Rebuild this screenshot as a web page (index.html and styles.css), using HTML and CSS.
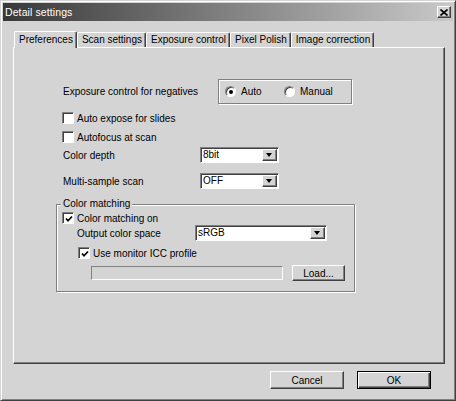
FILE: index.html
```html
<!DOCTYPE html>
<html>
<head>
<meta charset="utf-8">
<link rel="stylesheet" href="styles.css">
</head>
<body>
<div class="window">
  <div class="titlebar">
    <span class="title">Detail settings</span>
    <span class="close"><svg width="8" height="7" viewBox="0 0 8 7"><path d="M0.5 0.5 L7.5 6.5 M7.5 0.5 L0.5 6.5" stroke="#000" stroke-width="1.6"/></svg></span>
  </div>
  <div class="tabs">
    <div class="tab active">Preferences</div>
    <div class="tab">Scan settings</div>
    <div class="tab">Exposure control</div>
    <div class="tab">Pixel Polish</div>
    <div class="tab">Image correction</div>
  </div>
  <div class="panel">
    <div class="exp-row">
      <span class="exp-label">Exposure control for negatives</span>
      <div class="radio-box">
        <label class="radio radio-auto"><span class="rb checked"></span>Auto</label>
        <label class="radio"><span class="rb"></span>Manual</label>
      </div>
    </div>
    <div class="cb-row cb1"><span class="cb"></span>Auto expose for slides</div>
    <div class="cb-row cb2"><span class="cb"></span>Autofocus at scan</div>
    <div class="sel-row depth-row">
      <span class="sel-label">Color depth</span>
      <div class="select"><span class="sel-text">8bit</span><span class="dd"><span class="arrow"></span></span></div>
    </div>
    <div class="sel-row multi-row">
      <span class="sel-label">Multi-sample scan</span>
      <div class="select"><span class="sel-text">OFF</span><span class="dd"><span class="arrow"></span></span></div>
    </div>
    <fieldset class="group">
      <legend class="legend">Color matching</legend>
      <div class="cb-row cm-row"><span class="cb"><svg class="check" width="8" height="8" viewBox="0 0 8 8"><path d="M1 3.5 L3 5.8 L7 1.5" fill="none" stroke="#000" stroke-width="1.7"/></svg></span>Color matching on</div>
      <div class="sel-row out-row">
        <span class="out-label">Output color space</span>
        <div class="select wide"><span class="sel-text">sRGB</span><span class="dd"><span class="arrow"></span></span></div>
      </div>
      <div class="cb-row mon-row"><span class="cb"><svg class="check" width="8" height="8" viewBox="0 0 8 8"><path d="M1 3.5 L3 5.8 L7 1.5" fill="none" stroke="#000" stroke-width="1.7"/></svg></span>Use monitor ICC profile</div>
      <div class="file-row">
        <span class="field"></span>
        <span class="btn load">Load...</span>
      </div>
    </fieldset>
  </div>
  <div class="buttons">
    <span class="btn big">Cancel</span>
    <span class="btn big default">OK</span>
  </div>
</div>
</body>
</html>
```
FILE: styles.css
```css
html, body {
  margin: 0;
  padding: 0;
  background: #d4d4d4;
}
body {
  font-family: "Liberation Sans", Arial, sans-serif;
  font-size: 10px;
  color: #000;
}
.window {
  width: 456px;
  height: 401px;
  box-sizing: border-box;
  border: 1px solid;
  border-color: #d4d4d4 #404040 #404040 #d4d4d4;
  box-shadow: inset 1px 1px #fff, inset -1px -1px #808080;
  padding: 2px;
  display: flex;
  flex-direction: column;
  background: #d4d4d4;
}
.titlebar {
  height: 18px;
  flex: none;
  background: linear-gradient(90deg, #383838 0%, #7a7a7a 45%, #c9c9c9 100%);
  display: flex;
  align-items: center;
  justify-content: space-between;
  padding: 0 2px;
  color: #fff;
}
.title {
  font-size: 10.5px;
  letter-spacing: 0.1px;
}
.close {
  width: 14px;
  height: 12px;
  box-sizing: border-box;
  background: #d4d4d4;
  border: 1px solid;
  border-color: #fff #404040 #404040 #fff;
  box-shadow: inset -1px -1px #808080;
  display: flex;
  align-items: center;
  justify-content: center;
}
.tabs {
  display: flex;
  align-items: flex-end;
  height: 16px;
  margin: 10px 0 0 11px;
  flex: none;
}
.tab {
  height: 15px;
  box-sizing: border-box;
  padding: 0 3px 0 4px;
  border: 1px solid;
  border-bottom: none;
  border-color: #fff #404040 #404040 #fff;
  border-radius: 2px 2px 0 0;
  box-shadow: inset -1px 0 #808080;
  line-height: 13px;
  background: #d4d4d4;
}
.tab.active {
  height: 17px;
  margin-bottom: -1px;
  position: relative;
  z-index: 1;
  line-height: 15px;
}
.panel {
  height: 317px;
  flex: none;
  box-sizing: border-box;
  margin: 0 8px 0 10px;
  border: 1px solid;
  border-color: #fff #404040 #404040 #fff;
  box-shadow: inset -1px -1px #808080;
  padding: 31px 0 0 48px;
}
.exp-row {
  display: flex;
  align-items: center;
  height: 25px;
}
.exp-label {
  width: 155px;
  padding-left: 1px;
}
.radio-box {
  width: 134px;
  height: 25px;
  box-sizing: border-box;
  border: 1px solid #808080;
  box-shadow: inset 1px 1px #fff, 1px 1px #fff;
  display: flex;
  align-items: center;
  padding-left: 6px;
}
.radio {
  display: flex;
  align-items: center;
  gap: 5px;
}
.radio-auto {
  width: 59px;
}
.rb {
  width: 11px;
  height: 11px;
  box-sizing: border-box;
  border-radius: 50%;
  border: 1px solid;
  border-color: #808080 #fff #fff #808080;
  box-shadow: inset 1px 1px #404040;
  background: #fff;
  display: flex;
  align-items: center;
  justify-content: center;
}
.rb.checked::after {
  content: "";
  width: 4px;
  height: 4px;
  border-radius: 50%;
  background: #000;
}
.cb-row {
  display: flex;
  align-items: center;
  height: 14px;
  gap: 3px;
}
.cb {
  width: 12px;
  height: 12px;
  box-sizing: border-box;
  border: 1px solid;
  border-color: #808080 #fff #fff #808080;
  box-shadow: inset 1px 1px #404040;
  background: #fff;
  display: flex;
  align-items: center;
  justify-content: center;
  flex: none;
}
.check {
  margin: 1px 0 0 1px;
}
.cb1 { margin-top: 7px; }
.cb2 { margin-top: 5px; }
.sel-row {
  display: flex;
  align-items: center;
  height: 16px;
}
.sel-label {
  width: 137px;
  padding-left: 1px;
}
.depth-row { margin-top: 3px; }
.multi-row { margin-top: 10px; }
.select {
  width: 79px;
  height: 16px;
  box-sizing: border-box;
  border: 1px solid;
  border-color: #808080 #fff #fff #808080;
  box-shadow: inset 1px 1px #404040;
  background: #fff;
  display: flex;
  align-items: center;
  padding: 1px 1px 1px 2px;
}
.select.wide {
  width: 132px;
}
.sel-text {
  flex: 1;
  line-height: 12px;
}
.dd {
  width: 15px;
  height: 12px;
  box-sizing: border-box;
  background: #d4d4d4;
  border: 1px solid;
  border-color: #fff #404040 #404040 #fff;
  box-shadow: inset -1px -1px #808080;
  display: flex;
  align-items: center;
  justify-content: center;
}
.arrow {
  width: 0;
  height: 0;
  border-left: 3.5px solid transparent;
  border-right: 3.5px solid transparent;
  border-top: 4px solid #000;
  margin-left: -1px;
}
.group {
  margin: 9px 0 0 -6px;
  width: 299px;
  height: 94px;
  box-sizing: border-box;
  border: 1px solid #808080;
  box-shadow: inset 1px 1px #fff, 1px 1px #fff;
  padding: 0 0 0 5px;
}
.legend {
  margin-left: -1px;
  padding: 0 2px;
  line-height: 12px;
  background: #d4d4d4;
}
.cm-row { margin-top: 1px; }
.out-row { margin-top: 0; }
.out-label {
  width: 118px;
  padding-left: 15px;
}
.mon-row {
  margin-top: 5px;
  padding-left: 16px;
}
.file-row {
  display: flex;
  align-items: center;
  height: 16px;
  margin-top: 5px;
  padding-left: 29px;
  gap: 9px;
}
.field {
  width: 192px;
  height: 14px;
  box-sizing: border-box;
  border: 1px solid;
  border-color: #808080 #fff #fff #808080;
  background: #d4d4d4;
}
.btn {
  box-sizing: border-box;
  border: 1px solid;
  border-color: #fff #404040 #404040 #fff;
  box-shadow: inset -1px -1px #808080;
  background: #d4d4d4;
  display: flex;
  align-items: center;
  justify-content: center;
}
.load {
  width: 53px;
  height: 16px;
}
.buttons {
  display: flex;
  justify-content: flex-end;
  gap: 13px;
  margin-top: 7px;
  padding-right: 22px;
}
.big {
  width: 74px;
  height: 18px;
}
.default {
  border-color: #000;
  box-shadow: inset 1px 1px #fff, inset -1px -1px #404040, inset -2px -2px #808080;
}
```
